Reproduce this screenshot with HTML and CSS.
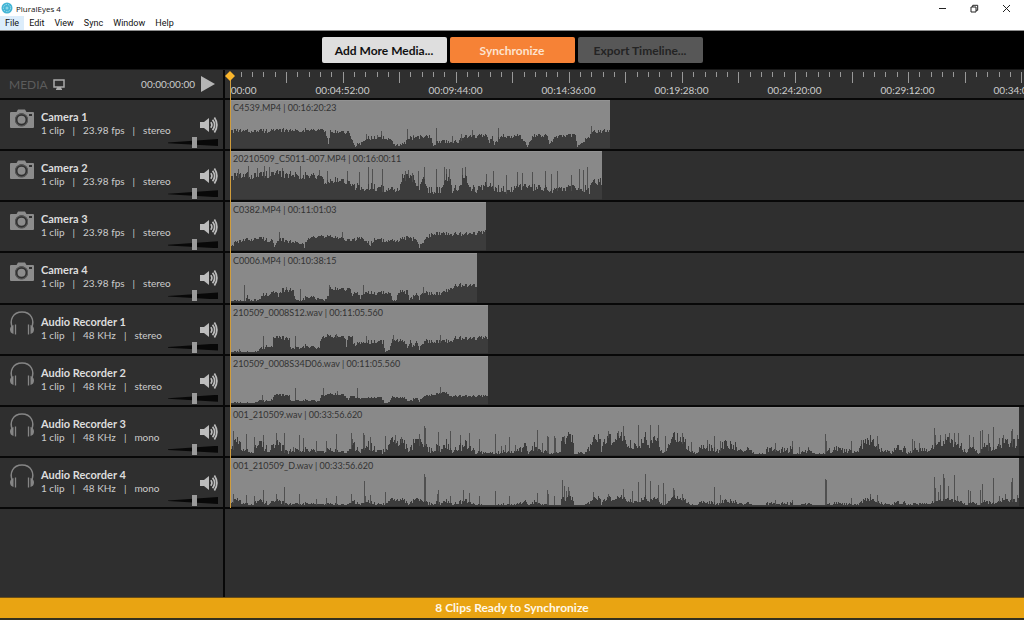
FILE: index.html
```html
<!DOCTYPE html>
<html lang="en">
<head>
<meta charset="utf-8">
<title>PluralEyes 4</title>
<link rel="stylesheet" href="styles.css">
</head>
<body>
<svg class="symbols" aria-hidden="true">
  <symbol id="camera" viewBox="0 0 24 20">
    <path fill="#8c8c8c" fill-rule="evenodd" d="M1 3h5.500l1.500-2.500h7L16.500 3H23q1 0 1 1v14q0 1-1 1H1q-1 0-1-1V4q0-1 1-1zm10.500 1.300a6.500 6.500 0 1 0 .01 0zM19 5v2h3V5z"/>
    <circle cx="11.500" cy="10.800" r="6.500" fill="#5a5a5a"/>
    <circle cx="11.500" cy="10.800" r="4.800" fill="#8c8c8c" stroke="#2f2f2f" stroke-width="1.600"/>
  </symbol>
  <symbol id="headphones" viewBox="0 0 24 24">
    <path fill="none" stroke="#868686" stroke-width="1.500" d="M2.500 17C-1 9 3 1 12 1s13 8 9.500 16"/>
    <path fill="#868686" d="M3.500 14v9Q0 22 0 18.500T3.500 14zM20.500 14v9q3.500-1 3.500-4.500T20.500 14z"/>
    <path stroke="#868686" stroke-width="1.300" d="M5.500 13.500v10M18.500 13.500v10"/>
  </symbol>
  <symbol id="speaker" viewBox="0 0 18 18">
    <path fill="#bdbdbd" d="M0 6h4l5-4v14l-5-4H0z"/>
    <path fill="none" stroke="#bdbdbd" stroke-width="1.700" d="M10.800 6.300q2.200 2.700 0 5.400M12.600 3.800q4 5.200 0 10.400M14.400 1.600q5 7.400 0 14.800"/>
  </symbol>
</svg>

<header class="titlebar">
  <svg class="app-icon" viewBox="0 0 12 12" aria-hidden="true"><circle cx="6" cy="6" r="5.500" fill="#43b5d6"/><circle cx="6" cy="6" r="3.600" fill="none" stroke="#a5e0ee" stroke-dasharray="1.500 1"/><circle cx="6" cy="6" r="1.500" fill="#8bd5e8"/></svg>
  <span class="app-name">PluralEyes 4</span>
  <div class="window-controls">
    <button type="button" aria-label="Minimize"><svg viewBox="0 0 9 9"><path d="M1 4.500h7"/></svg></button>
    <button type="button" aria-label="Restore"><svg viewBox="0 0 9 9"><path d="M1 3h5v5H1zM2.700 3V1.300h5V6.300H6"/></svg></button>
    <button type="button" aria-label="Close"><svg viewBox="0 0 9 9"><path d="M1 1l7 7M8 1L1 8"/></svg></button>
  </div>
</header>
<nav class="menubar" aria-label="Menu">
  <button type="button" class="active">File</button>
  <button type="button">Edit</button>
  <button type="button">View</button>
  <button type="button">Sync</button>
  <button type="button">Window</button>
  <button type="button">Help</button>
</nav>

<div class="toolbar">
  <button type="button" class="action add">Add More Media...</button>
  <button type="button" class="action sync">Synchronize</button>
  <button type="button" class="action export" disabled>Export Timeline...</button>
</div>

<main class="workspace">
  <aside class="sidebar">
    <div class="transport">
      <span class="media">MEDIA</span>
      <svg class="monitor" viewBox="0 0 12 11" aria-hidden="true"><path fill="none" stroke="#aaa" stroke-width="1.500" d="M1 1h10v7H1z"/><path fill="#aaa" d="M4 8h4v1.500h1V11H3V9.500h1z"/></svg>
      <span class="timecode">00:00:00:00</span>
      <button type="button" class="play" aria-label="Play"><svg viewBox="0 0 14 16"><path fill="#b5b5b5" d="M0 0l14 8-14 8z"/></svg></button>
    </div>
    <div class="tracks">
      <section class="track"><svg class="device"><use href="#camera"/></svg><div class="info"><h2>Camera 1</h2><p><span>1 clip</span><i>|</i><span>23.98 fps</span><i>|</i><span>stereo</span></p></div><div class="volume"><button type="button" aria-label="Mute Camera 1"><svg><use href="#speaker"/></svg></button><input type="range" value="53" aria-label="Volume Camera 1"></div></section>
      <section class="track"><svg class="device"><use href="#camera"/></svg><div class="info"><h2>Camera 2</h2><p><span>1 clip</span><i>|</i><span>23.98 fps</span><i>|</i><span>stereo</span></p></div><div class="volume"><button type="button" aria-label="Mute Camera 2"><svg><use href="#speaker"/></svg></button><input type="range" value="53" aria-label="Volume Camera 2"></div></section>
      <section class="track"><svg class="device"><use href="#camera"/></svg><div class="info"><h2>Camera 3</h2><p><span>1 clip</span><i>|</i><span>23.98 fps</span><i>|</i><span>stereo</span></p></div><div class="volume"><button type="button" aria-label="Mute Camera 3"><svg><use href="#speaker"/></svg></button><input type="range" value="53" aria-label="Volume Camera 3"></div></section>
      <section class="track"><svg class="device"><use href="#camera"/></svg><div class="info"><h2>Camera 4</h2><p><span>1 clip</span><i>|</i><span>23.98 fps</span><i>|</i><span>stereo</span></p></div><div class="volume"><button type="button" aria-label="Mute Camera 4"><svg><use href="#speaker"/></svg></button><input type="range" value="53" aria-label="Volume Camera 4"></div></section>
      <section class="track"><svg class="device phones"><use href="#headphones"/></svg><div class="info"><h2>Audio Recorder 1</h2><p><span>1 clip</span><i>|</i><span>48 KHz</span><i>|</i><span>stereo</span></p></div><div class="volume"><button type="button" aria-label="Mute Audio Recorder 1"><svg><use href="#speaker"/></svg></button><input type="range" value="53" aria-label="Volume Audio Recorder 1"></div></section>
      <section class="track"><svg class="device phones"><use href="#headphones"/></svg><div class="info"><h2>Audio Recorder 2</h2><p><span>1 clip</span><i>|</i><span>48 KHz</span><i>|</i><span>stereo</span></p></div><div class="volume"><button type="button" aria-label="Mute Audio Recorder 2"><svg><use href="#speaker"/></svg></button><input type="range" value="53" aria-label="Volume Audio Recorder 2"></div></section>
      <section class="track"><svg class="device phones"><use href="#headphones"/></svg><div class="info"><h2>Audio Recorder 3</h2><p><span>1 clip</span><i>|</i><span>48 KHz</span><i>|</i><span>mono</span></p></div><div class="volume"><button type="button" aria-label="Mute Audio Recorder 3"><svg><use href="#speaker"/></svg></button><input type="range" value="53" aria-label="Volume Audio Recorder 3"></div></section>
      <section class="track"><svg class="device phones"><use href="#headphones"/></svg><div class="info"><h2>Audio Recorder 4</h2><p><span>1 clip</span><i>|</i><span>48 KHz</span><i>|</i><span>mono</span></p></div><div class="volume"><button type="button" aria-label="Mute Audio Recorder 4"><svg><use href="#speaker"/></svg></button><input type="range" value="53" aria-label="Volume Audio Recorder 4"></div></section>
    </div>
  </aside>

  <div class="timeline">
    <div class="ruler">
      <svg class="ticks" aria-hidden="true"></svg>
      <div class="marks">
        <span>00:00:00:00</span><span>00:04:52:00</span><span>00:09:44:00</span><span>00:14:36:00</span><span>00:19:28:00</span><span>00:24:20:00</span><span>00:29:12:00</span><span>00:34:04:00</span>
      </div>
    </div>
    <div class="tracks">
      <div class="lane"><div class="clip" style="width:380px"><span>C4539.MP4 | 00:16:20:23</span><svg class="wave" data-wave="cam1"></svg></div></div>
      <div class="lane"><div class="clip" style="width:372px"><span>20210509_C5011-007.MP4 | 00:16:00:11</span><svg class="wave" data-wave="cam2"></svg></div></div>
      <div class="lane"><div class="clip" style="width:256px"><span>C0382.MP4 | 00:11:01:03</span><svg class="wave" data-wave="cam3"></svg></div></div>
      <div class="lane"><div class="clip" style="width:247px"><span>C0006.MP4 | 00:10:38:15</span><svg class="wave" data-wave="cam4"></svg></div></div>
      <div class="lane"><div class="clip" style="width:258px"><span>210509_0008S12.wav | 00:11:05.560</span><svg class="wave" data-wave="rec1"></svg></div></div>
      <div class="lane"><div class="clip" style="width:258px"><span>210509_0008S34D06.wav | 00:11:05.560</span><svg class="wave" data-wave="rec2"></svg></div></div>
      <div class="lane"><div class="clip" style="width:789px"><span>001_210509.wav | 00:33:56.620</span><svg class="wave" data-wave="rec3"></svg></div></div>
      <div class="lane"><div class="clip" style="width:789px"><span>001_210509_D.wav | 00:33:56.620</span><svg class="wave" data-wave="rec4"></svg></div></div>
    </div>
    <div class="playhead"><svg viewBox="0 0 10 10" aria-hidden="true"><path fill="#fbb62c" d="M5 0l5 5-5 5-5-5z"/></svg></div>
  </div>
</main>
<footer class="status" role="status">8 Clips Ready to Synchronize</footer>
<script src="waves.js"></script>
</body>
</html>
```
FILE: styles.css
```css
* { box-sizing: border-box; }

body {
  margin: 0;
  min-height: 100vh;
  display: flex;
  flex-direction: column;
  background: #2f2f2f;
  color: #ccc;
  font-family: Lato, "Liberation Sans", sans-serif;
  font-size: 11px;
}

button {
  margin: 0;
  padding: 0;
  border: 0;
  background: none;
  font: inherit;
  color: inherit;
}

svg { display: block; }
.symbols { position: absolute; width: 0; height: 0; }

.titlebar {
  display: flex;
  align-items: center;
  height: 16px;
  padding: 0 2px 0 1px;
  background: #fff;
  color: #111;
  font-family: "Open Sans", "Noto Sans", sans-serif;
  font-size: 8px;
}
.app-icon { width: 12px; height: 12px; margin-right: 3px; }
.window-controls { display: flex; margin-left: auto; }
.window-controls button { display: grid; place-items: center; width: 32px; height: 14px; }
.window-controls svg { width: 9px; height: 9px; fill: none; stroke: #222; stroke-width: 1; }

.menubar {
  display: flex;
  height: 15px;
  background: #fff;
  color: #111;
  border-bottom: 1px solid #8d8d8d;
  font-family: Roboto, "Noto Sans", sans-serif;
  font-size: 9px;
}
.menubar button { padding: 0 5px; }
.menubar .active { background: #dcedfb; }

.toolbar {
  display: flex;
  justify-content: center;
  gap: 3px;
  padding: 6px 0;
  background: #000;
}
.action {
  width: 125px;
  height: 26px;
  border-radius: 2px;
  font-size: 12px;
  font-weight: 700;
}
.add { background: #dedede; color: #111; }
.sync { background: #f68236; color: #fde3cf; }
.export { background: #575757; color: #242424; }

.workspace {
  flex: 1;
  display: grid;
  grid-template-columns: 225px 1fr;
  border-top: 1px solid #191919;
}
.sidebar { border-right: 2px solid #080808; }

.transport, .ruler { height: 30px; border-bottom: 2px solid #080808; }
.transport {
  display: flex;
  align-items: center;
  padding: 0 8px 0 9px;
}
.media { color: #5c5c5c; font-size: 12px; }
.monitor { width: 12px; height: 11px; margin-left: 5px; }
.timecode { margin-left: auto; font-size: 10px; }
.play { margin-left: 6px; }
.play svg { width: 14px; height: 16px; }

.tracks { display: grid; grid-auto-rows: 1fr; height: 409px; }
.track, .lane { border-bottom: 2px solid #080808; }

.track {
  display: grid;
  grid-template-columns: 24px minmax(0, 1fr) 50px;
  column-gap: 7px;
  padding: 0 5px 0 10px;
}
.device { width: 24px; height: 20px; margin-top: 9px; }
.phones { height: 24px; margin-top: 6px; }
.info { padding-top: 10px; white-space: nowrap; }
.info h2 { margin: 0; font-size: 11px; line-height: 14px; font-weight: 700; color: #ddd; }
.info p { display: flex; gap: 8px; margin: 0; font-size: 10px; line-height: 12px; }
.info i { font-style: normal; }

.volume { position: relative; display: flex; flex-direction: column; align-items: flex-end; padding-top: 16px; }
.volume button svg { width: 18px; height: 18px; }
.volume::before {
  content: "";
  position: absolute;
  left: 0;
  right: 0;
  top: 39px;
  height: 7px;
  background: #080808;
  clip-path: polygon(0 50%, 100% 0, 100% 100%, 0 60%);
}
.volume input {
  appearance: none;
  position: relative;
  width: 50px;
  height: 11px;
  margin: 3px 0 0;
  background: none;
}
.volume input::-webkit-slider-thumb { appearance: none; width: 5px; height: 11px; background: #9b9b9b; }

.timeline { position: relative; padding-left: 5px; overflow: hidden; min-width: 0; }
.ruler { margin-left: -5px; padding-left: 5px; overflow: hidden; }
.ticks { width: 100%; height: 13px; }
.marks { display: flex; height: 15px; overflow: hidden; }
.marks span { flex: 0 0 113px; text-align: center; font-size: 10px; line-height: 14px; }
.marks span:first-child { margin-left: -57px; }
.timeline .tracks { margin-left: -5px; }
.lane { padding-left: 5px; }
.clip {
  display: flex;
  flex-direction: column;
  justify-content: space-between;
  height: 100%;
  background: #898989;
  border-top: 1px solid #929292;
  color: #333;
}
.clip span { padding-left: 3px; font-size: 9px; line-height: 14px; white-space: nowrap; }
.wave { width: 100%; height: 34px; border-bottom: 1px solid #333; }

.playhead {
  position: absolute;
  left: 5px;
  top: 5px;
  width: 1px;
  height: 433px;
  background: #cf9c3c;
}
.playhead svg { position: absolute; left: -5px; top: -4px; width: 10px; height: 10px; }

.status {
  height: 23px;
  border-top: 1px solid #6b4e16;
  border-bottom: 2px solid #33301f;
  background: #e9a412;
  color: #fff8e8;
  font-size: 12px;
  font-weight: 700;
  line-height: 20px;
  text-align: center;
}
```
FILE: waves.js
```js
// Each waveform: level = envelope as "x:height", peaks = isolated transients, jitter = roughness.
const rec3Level = '0:2 2:8 7:14 12:5 22:3 28:12 38:6 47:10 58:3 70:7 76:5 92:3 98:5 110:3 118:3 124:10 129:3 137:10 152:3 158:8 160:13 174:12 178:2 185:15 193:10 200:5 208:8 212:5 216:12 223:4 230:8 235:12 245:3 254:2 264:2 275:4 285:3 293:8 296:9 298:1 305:10 307:4 316:3 320:2 330:2 332:20 334:12 338:18 342:16 344:1 350:4 355:2 360:9 363:16 369:17 371:6 376:14 378:20 383:10 388:20 393:18 395:12 404:10 412:12 415:20 418:10 425:17 432:3 440:10 443:20 450:16 455:12 460:3 466:2 470:10 480:7 488:3 492:10 500:10 508:7 512:6 518:8 521:6 524:1 535:1 537:6 545:4 558:6 562:6 563:1 570:2 579:5 585:1 594:1 598:4 605:6 615:4 628:3 632:10 640:15 645:11 650:6 658:5 661:1 664:7 675:6 677:2 687:6 690:5 698:4 706:10 710:12 720:14 730:11 735:2 739:8 749:2 755:10 765:5 770:12 785:12 789:16';
const waves = {
  cam1: { jitter: 2, level: '0:17 95:18 98:3 100:16 118:16 124:2 130:5 138:10 152:11 160:8 164:3 172:3 180:10 200:12 203:4 210:7 228:6 234:12 257:12 259:5 262:11 264:4 270:12 290:12 297:1 303:12 317:12 319:5 325:11 345:13 347:2 352:7 358:10 362:16 380:17', peaks: '136:14 147:13 151:17 177:19 183:13 206:20 222:12 231:14 242:18 268:20 361:22' },
  cam2: { jitter: 4, level: '0:22 40:25 69:24 90:22 98:15 102:19 115:18 123:12 128:14 133:9 140:13 155:10 165:8 170:12 172:22 184:20 186:11 190:12 193:24 196:10 205:9 213:11 215:22 220:20 222:10 230:11 232:24 237:20 239:11 250:10 255:13 275:9 290:13 310:10 330:9 350:12 359:8 361:17 372:17', peaks: '8:30 18:33 27:31 34:33 39:32 52:31 70:33 89:29 97:28 117:28 129:27 138:32 142:30 152:30 175:28 178:29 182:26 188:28 194:32 206:30 214:32 216:30 219:30 232:31 235:32 256:25 263:28 276:24 287:27 292:26 302:27 315:28 321:25 327:28 341:24 349:30 353:29 357:32' },
  cam3: { jitter: 2, level: '0:3 5:7 14:10 30:12 42:9 44:3 50:11 60:8 72:8 74:4 78:12 95:14 110:12 120:9 130:13 140:6 145:12 155:9 165:9 175:12 185:11 189:3 195:11 202:17 230:16 256:18', peaks: '49:18 112:18' },
  cam4: { jitter: 2, level: '0:1 15:1 17:5 21:2 30:2 32:7 45:10 48:5 52:12 63:12 65:2 70:3 80:5 93:2 98:5 99:13 120:13 122:5 125:11 130:5 135:10 145:9 155:10 160:8 162:1 166:2 168:10 177:10 179:2 186:8 189:3 192:9 212:9 220:14 228:17 247:17', peaks: '14:17 56:15 70:13 99:17 133:17 193:15' },
  rec1: { jitter: 2, level: '0:1 24:1 32:5 38:8 42:5 43:15 59:15 60:4 65:6 75:7 89:5 90:11 93:17 115:16 116:7 118:16 122:16 123:8 127:10 150:12 153:11 155:2 159:3 162:12 167:13 175:11 177:3 180:11 183:6 186:11 189:4 194:12 220:12 225:15 258:15', peaks: '9:4 33:17 65:17 106:19 136:17 163:18 210:18' },
  rec2: { jitter: 1, level: '0:1 24:1 28:3 42:4 44:9 59:9 60:3 67:4 89:3 91:8 100:10 115:9 118:3 120:8 130:6 150:7 155:1 159:2 162:7 175:6 177:2 186:6 189:3 194:8 210:11 215:12 220:8 258:8', peaks: '32:9 65:16 93:16 107:13 127:16 210:17' },
  rec3: { jitter: 5, level: rec3Level, peaks: '3:24 16:21 24:18 33:20 46:22 54:22 63:8 69:20 73:17 86:14 96:14 106:21 121:22 122:16 133:22 134:20 140:18 155:19 165:20 171:18 189:21 194:29 195:27 208:23 220:24 230:20 239:22 249:16 265:21 271:9 275:10 279:18 285:10 307:25 312:12 317:19 318:18 324:19 325:17 334:19 378:24 388:24 393:29 408:30 415:23 420:30 428:30 435:19 443:22 452:22 461:13 477:15 484:19 490:14 505:13 545:12 562:14 569:8 578:8 595:21 596:14 621:14 631:15 640:17 647:19 682:16 684:14 689:12 704:27 705:20 710:20 715:21 719:22 724:22 728:22 739:20 743:18 750:24 752:25 758:21 763:28 769:17 773:20 781:24 782:26 787:20' },
  rec4: { jitter: 2, scale: 0.48, level: rec3Level, peaks: '3:12 16:11 24:10 33:16 46:12 54:19 69:12 86:7 96:8 106:10 121:12 134:25 135:10 140:11 155:14 194:32 195:29 207:12 208:16 220:10 233:16 239:13 249:10 265:15 279:10 307:13 317:16 318:12 324:10 332:26 334:20 336:15 338:19 339:15 363:14 378:12 393:17 402:15 408:24 415:32 420:25 428:21 433:23 435:12 443:18 444:16 452:12 484:19 490:11 545:6 562:6 595:27 596:26 621:8 640:12 647:11 704:29 705:18 708:14 710:21 713:32 714:28 718:20 724:31 727:10 738:16 740:15 750:16 752:22 763:28 769:10 775:12 781:24 782:28 787:11' }
};

const NS = 'http://www.w3.org/2000/svg';
const HEIGHT = 33;
const parse = text => text.split(' ').map(pair => pair.split(':').map(Number));

function addPath(svg, d, fill) {
  const path = document.createElementNS(NS, 'path');
  path.setAttribute('d', d);
  path.setAttribute('fill', fill);
  svg.append(path);
}

document.querySelectorAll('.wave').forEach(svg => {
  const wave = waves[svg.dataset.wave];
  const points = parse(wave.level);
  const scale = wave.scale || 1;
  let seed = 7919;
  const random = () => (seed = (seed * 16807) % 2147483647) / 2147483647;
  let body = '';
  let edge = 0;
  for (let x = 0; x < points[points.length - 1][0]; x++) {
    while (edge < points.length - 2 && points[edge + 1][0] <= x) edge++;
    const [x0, h0] = points[edge];
    const [x1, h1] = points[edge + 1];
    const level = (h0 + (h1 - h0) * (x - x0) / (x1 - x0)) * scale;
    const swing = Math.min(wave.jitter, level * 0.6);
    const h = Math.max(1, Math.round(level + (random() * 2 - 1) * swing));
    body += `M${x} ${HEIGHT - h}h1v${h}h-1z`;
  }
  const peaks = parse(wave.peaks).map(([x, h]) => `M${x} ${HEIGHT - h}h1v${h}h-1z`).join('');
  addPath(svg, peaks, '#505050');
  addPath(svg, body, '#3c3c3c');
});

const ticks = document.querySelector('.ticks');
let marks = '';
for (let i = 1; i * 11.31 < ticks.clientWidth; i++) {
  marks += `M${Math.round(i * 11.31 - 0.5)} 2h1v${i % 5 ? 5 : 11}h-1z`;
}
addPath(ticks, marks, '#999');
```
